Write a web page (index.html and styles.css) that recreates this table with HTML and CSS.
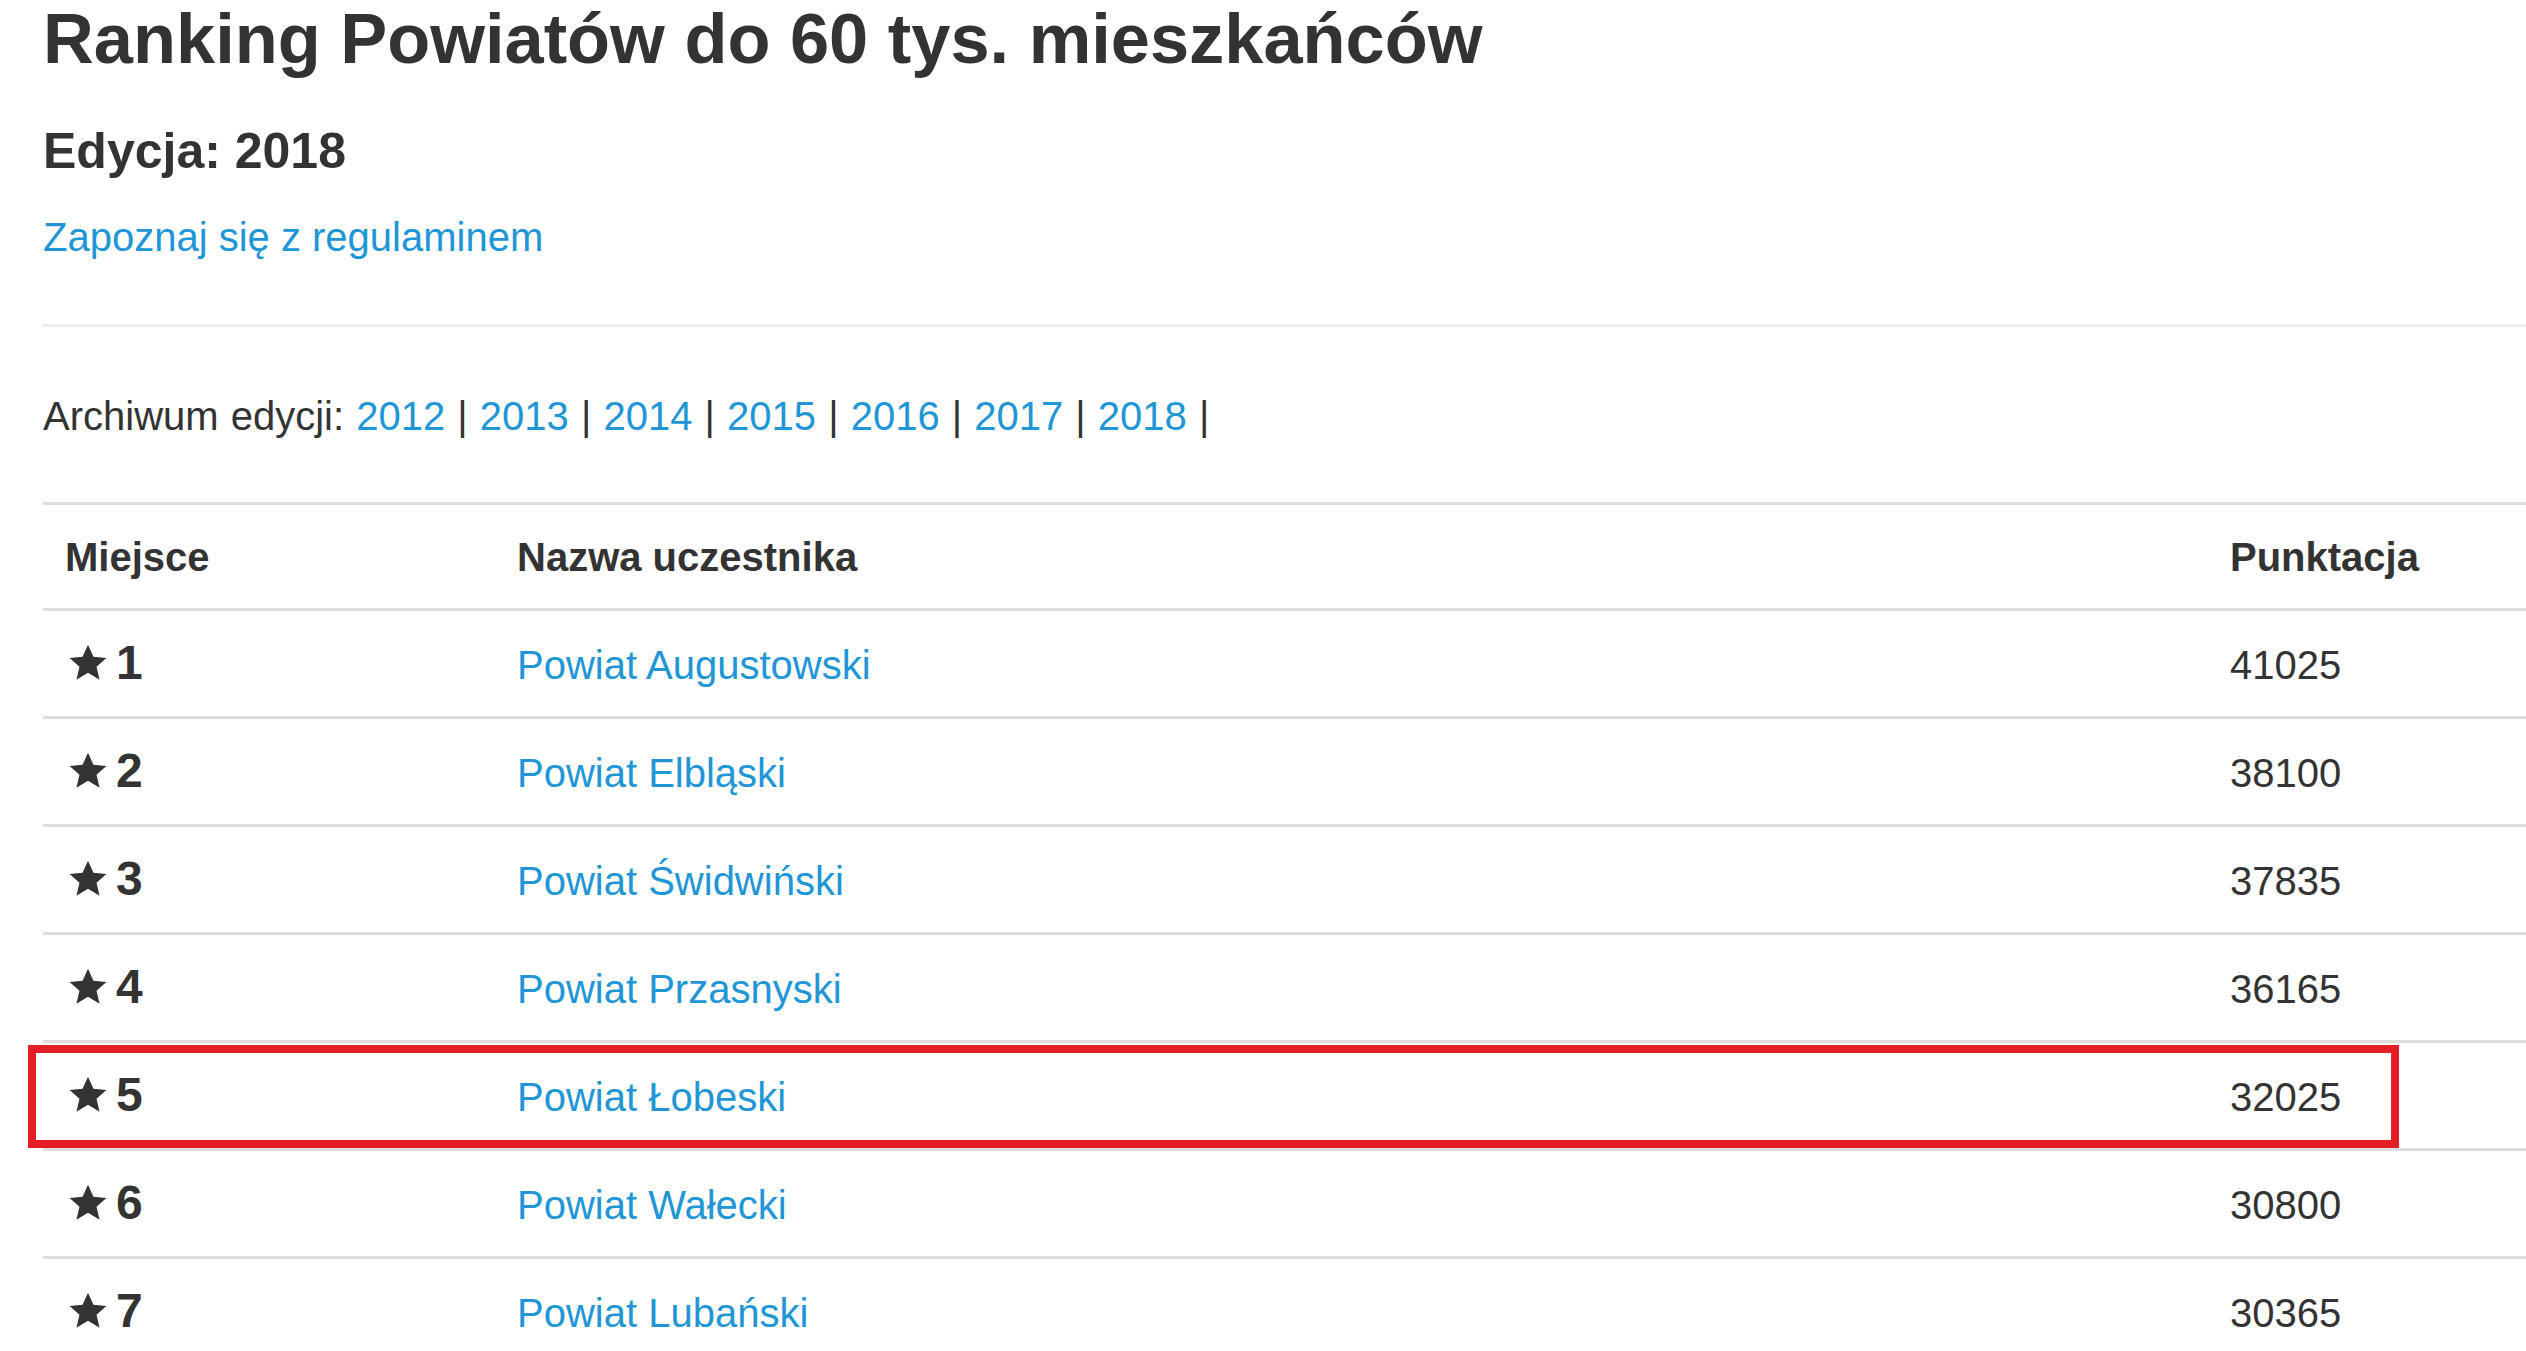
FILE: index.html
```html
<!DOCTYPE html>
<html lang="pl">
  <head>
    <meta charset="UTF-8" />
    <meta name="viewport" content="width=device-width, initial-scale=1.0" />
    <title>Ranking Powiatów do 60 tys. mieszkańców</title>
    <link rel="stylesheet" href="styles.css">
  </head>

  <body>
    <div class="page">
      <h1 class="title">Ranking Powiatów do 60 tys. mieszkańców</h1>
      <h4 class="edition">Edycja: 2018</h4>
      <p class="rules"><a href="#">Zapoznaj się z regulaminem</a></p>
      <hr class="divider">
      <p class="archive">Archiwum edycji: <a href="#">2012</a> | <a href="#">2013</a> | <a href="#">2014</a> | <a href="#">2015</a> | <a href="#">2016</a> | <a href="#">2017</a> | <a href="#">2018</a> |</p>

      <table class="ranking">
        <colgroup>
          <col class="col-place">
          <col class="col-name">
          <col>
        </colgroup>
        <thead>
          <tr>
            <th>Miejsce</th>
            <th>Nazwa uczestnika</th>
            <th>Punktacja</th>
          </tr>
        </thead>
        <tbody>
          <tr>
            <td><svg class="star" viewBox="0 0 24 24"><path d="M12 1.5l3.1 6.9 7.4.7-5.6 5 1.7 7.4L12 17.6l-6.6 3.9 1.7-7.4-5.6-5 7.4-.7z"/></svg><span class="place">1</span></td>
            <td><a href="#">Powiat Augustowski</a></td>
            <td>41025</td>
          </tr>
          <tr>
            <td><svg class="star" viewBox="0 0 24 24"><path d="M12 1.5l3.1 6.9 7.4.7-5.6 5 1.7 7.4L12 17.6l-6.6 3.9 1.7-7.4-5.6-5 7.4-.7z"/></svg><span class="place">2</span></td>
            <td><a href="#">Powiat Elbląski</a></td>
            <td>38100</td>
          </tr>
          <tr>
            <td><svg class="star" viewBox="0 0 24 24"><path d="M12 1.5l3.1 6.9 7.4.7-5.6 5 1.7 7.4L12 17.6l-6.6 3.9 1.7-7.4-5.6-5 7.4-.7z"/></svg><span class="place">3</span></td>
            <td><a href="#">Powiat Świdwiński</a></td>
            <td>37835</td>
          </tr>
          <tr>
            <td><svg class="star" viewBox="0 0 24 24"><path d="M12 1.5l3.1 6.9 7.4.7-5.6 5 1.7 7.4L12 17.6l-6.6 3.9 1.7-7.4-5.6-5 7.4-.7z"/></svg><span class="place">4</span></td>
            <td><a href="#">Powiat Przasnyski</a></td>
            <td>36165</td>
          </tr>
          <tr>
            <td><svg class="star" viewBox="0 0 24 24"><path d="M12 1.5l3.1 6.9 7.4.7-5.6 5 1.7 7.4L12 17.6l-6.6 3.9 1.7-7.4-5.6-5 7.4-.7z"/></svg><span class="place">5</span></td>
            <td><a href="#">Powiat Łobeski</a></td>
            <td>32025</td>
          </tr>
          <tr>
            <td><svg class="star" viewBox="0 0 24 24"><path d="M12 1.5l3.1 6.9 7.4.7-5.6 5 1.7 7.4L12 17.6l-6.6 3.9 1.7-7.4-5.6-5 7.4-.7z"/></svg><span class="place">6</span></td>
            <td><a href="#">Powiat Wałecki</a></td>
            <td>30800</td>
          </tr>
          <tr>
            <td><svg class="star" viewBox="0 0 24 24"><path d="M12 1.5l3.1 6.9 7.4.7-5.6 5 1.7 7.4L12 17.6l-6.6 3.9 1.7-7.4-5.6-5 7.4-.7z"/></svg><span class="place">7</span></td>
            <td><a href="#">Powiat Lubański</a></td>
            <td>30365</td>
          </tr>
        </tbody>
      </table>

      <!-- red annotation box around 5th place -->
      <div class="highlight"></div>
    </div>
  </body>
</html>
```

FILE: styles.css
```css
html,
body {
  margin: 0;
  overflow: hidden;
  background: #fff;
}

body {
  font-family: "Liberation Sans", Arial, Helvetica, sans-serif;
  font-size: 40px;
  line-height: 56px;
  color: #333;
}

a {
  color: #2196d6;
  text-decoration: none;
}

.page {
  position: relative;
  padding-left: 43px;
}

.title {
  margin: 0;
  font-size: 70.4px;
  line-height: 77px;
  font-weight: bold;
}

.edition {
  margin: 47px 0 0;
  font-size: 50px;
  line-height: 54px;
  font-weight: bold;
}

.rules {
  margin: 31px 0 0;
}

.divider {
  margin: 59px 0 0;
  border: 0;
  border-top: 3px solid #eee;
}

.archive {
  margin: 61px 0 0;
  word-spacing: 1px;
}

.ranking {
  margin-top: 58px;
  width: 100%;
  border-collapse: separate;
  border-spacing: 0;
  border-top: 3px solid #ddd;
}

.col-place {
  width: 452px;
}

.col-name {
  width: 1713px;
}

.ranking th,
.ranking td {
  text-align: left;
  padding: 26px 22px 22px;
  line-height: 57px;
  border-bottom: 3px solid #ddd;
  vertical-align: top;
}

.ranking th {
  padding: 24px 22px 22px;
  font-weight: bold;
}

.star {
  width: 42px;
  height: 42px;
  margin: 0 7px 0 2px;
  vertical-align: -5px;
  fill: #333;
}

.place {
  font-size: 48px;
  line-height: 40px;
  font-weight: bold;
}

.highlight {
  position: absolute;
  left: 28px;
  top: 1045px;
  width: 2371px;
  height: 103px;
  box-sizing: border-box;
  border: 8px solid #e31e26;
}
```
